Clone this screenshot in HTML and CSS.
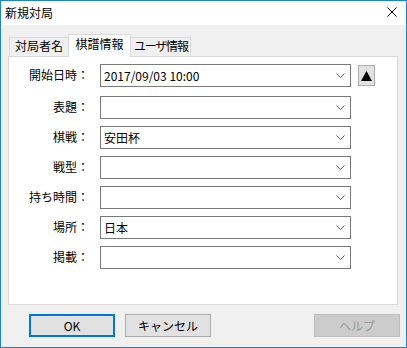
FILE: index.html
```html
<!DOCTYPE html>
<html lang="ja">
<head>
    <meta charset="UTF-8">
    <title>新規対局</title>
    <link rel="stylesheet" href="styles.css">
</head>
<body>
    <div class="window">
        <div class="titlebar">
            <span class="title">新規対局</span>
            <svg class="close" width="10" height="10" viewBox="0 0 10 10">
                <path d="M0.5 0.5 L9.5 9.5 M9.5 0.5 L0.5 9.5" stroke="#000" stroke-width="1" fill="none"/>
            </svg>
        </div>

        <div class="client">
            <div class="tabs">
                <div class="tab tab-first">対局者名</div>
                <div class="tab active">棋譜情報</div>
                <div class="tab tab-last">ユーザ情報</div>
            </div>

            <div class="panel">
                <div class="row row-first">
                    <label class="label">開始日時：</label>
                    <div class="combo">
                        <span class="value">2017/09/03 10:00</span>
                        <svg class="chevron" width="9" height="5" viewBox="0 0 9 5"><path d="M0.5 0.5 L4.5 4.5 L8.5 0.5" stroke="#606060" fill="none"/></svg>
                    </div>
                    <div class="spin">
                        <svg width="11" height="10" viewBox="0 0 11 10"><polygon points="5.5,0 11,10 0,10" fill="#000"/></svg>
                    </div>
                </div>
                <div class="row">
                    <label class="label">表題：</label>
                    <div class="combo">
                        <span class="value"></span>
                        <svg class="chevron" width="9" height="5" viewBox="0 0 9 5"><path d="M0.5 0.5 L4.5 4.5 L8.5 0.5" stroke="#606060" fill="none"/></svg>
                    </div>
                </div>
                <div class="row">
                    <label class="label">棋戦：</label>
                    <div class="combo">
                        <span class="value">安田杯</span>
                        <svg class="chevron" width="9" height="5" viewBox="0 0 9 5"><path d="M0.5 0.5 L4.5 4.5 L8.5 0.5" stroke="#606060" fill="none"/></svg>
                    </div>
                </div>
                <div class="row">
                    <label class="label">戦型：</label>
                    <div class="combo">
                        <span class="value"></span>
                        <svg class="chevron" width="9" height="5" viewBox="0 0 9 5"><path d="M0.5 0.5 L4.5 4.5 L8.5 0.5" stroke="#606060" fill="none"/></svg>
                    </div>
                </div>
                <div class="row">
                    <label class="label">持ち時間：</label>
                    <div class="combo">
                        <span class="value"></span>
                        <svg class="chevron" width="9" height="5" viewBox="0 0 9 5"><path d="M0.5 0.5 L4.5 4.5 L8.5 0.5" stroke="#606060" fill="none"/></svg>
                    </div>
                </div>
                <div class="row">
                    <label class="label">場所：</label>
                    <div class="combo">
                        <span class="value">日本</span>
                        <svg class="chevron" width="9" height="5" viewBox="0 0 9 5"><path d="M0.5 0.5 L4.5 4.5 L8.5 0.5" stroke="#606060" fill="none"/></svg>
                    </div>
                </div>
                <div class="row">
                    <label class="label">掲載：</label>
                    <div class="combo">
                        <span class="value"></span>
                        <svg class="chevron" width="9" height="5" viewBox="0 0 9 5"><path d="M0.5 0.5 L4.5 4.5 L8.5 0.5" stroke="#606060" fill="none"/></svg>
                    </div>
                </div>
            </div>

            <div class="buttons">
                <button class="btn default">OK</button>
                <button class="btn">キャンセル</button>
                <button class="btn disabled help">ヘルプ</button>
            </div>
        </div>
    </div>
</body>
</html>
```

FILE: styles.css
```css
* {
    margin: 0;
    padding: 0;
    box-sizing: border-box;
}

body {
    font-family: "Noto Sans CJK JP", "Noto Sans", sans-serif;
    font-size: 12px;
    color: #000;
    background: #fff;
}

.window {
    width: 407px;
    height: 348px;
    border: 1px solid #1883d7;
    background: #f0f0f0;
    display: flex;
    flex-direction: column;
}

.titlebar {
    height: 24px;
    background: #fff;
    display: flex;
    align-items: center;
    justify-content: space-between;
    padding: 0 9px 0 4px;
}

.title {
    line-height: 16px;
}

.close {
    display: block;
    margin-bottom: 2px;
}

.client {
    flex: 1;
    padding-top: 9px;
}

/* tab strip */
.tabs {
    display: flex;
    align-items: flex-end;
    height: 22px;
    margin-left: 8px;
}

.tab {
    height: 19px;
    line-height: 16px;
    border: 1px solid #d9d9d9;
    border-bottom: none;
    background: #f0f0f0;
    text-align: center;
    white-space: nowrap;
}

.tab-first {
    width: 61px;
    padding-right: 1px;
}

.tab.active {
    position: relative;
    z-index: 1;
    width: 63px;
    height: 23px;
    margin: 0 -2px -1px -2px;
    background: #fff;
    line-height: 18px;
}

.tab-last {
    width: 62px;
    padding-left: 2px;
    letter-spacing: -1px;
    font-feature-settings: "palt";
}

/* page */
.panel {
    height: 249px;
    margin: 0 8px 0 7px;
    border: 1px solid #d9d9d9;
    background: #fff;
    padding-top: 7px;
    display: flex;
    flex-direction: column;
    gap: 7px;
}

.row {
    display: flex;
    align-items: flex-start;
}

.row-first {
    margin-bottom: 2px;
}

.label {
    width: 80px;
    height: 23px;
    line-height: 22px;
    text-align: right;
    margin-right: 11px;
}

.combo {
    width: 251px;
    height: 23px;
    border: 1px solid #7a7a7a;
    background: #fff;
    display: flex;
    align-items: center;
    justify-content: space-between;
    padding: 0 5px 0 3px;
}

.value {
    line-height: 20px;
}

.chevron {
    display: block;
}

.spin {
    width: 17px;
    height: 21px;
    margin: 1px 0 0 7px;
    border: 1px solid #adadad;
    background: #e1e1e1;
    display: flex;
    align-items: center;
    justify-content: center;
}

.spin svg {
    display: block;
}

/* dialog buttons */
.buttons {
    display: flex;
    gap: 10px;
    margin-top: 9px;
    padding: 0 6px 0 28px;
}

.btn {
    width: 86px;
    height: 23px;
    font-family: inherit;
    font-size: 12px;
    color: #000;
    background: #e1e1e1;
    border: 1px solid #adadad;
}

.btn.default {
    border: 2px solid #0078d7;
}

.btn.help {
    margin-left: auto;
}

.btn.disabled {
    background: #cccccc;
    border-color: #bfbfbf;
    color: #9a9a9a;
}
```
